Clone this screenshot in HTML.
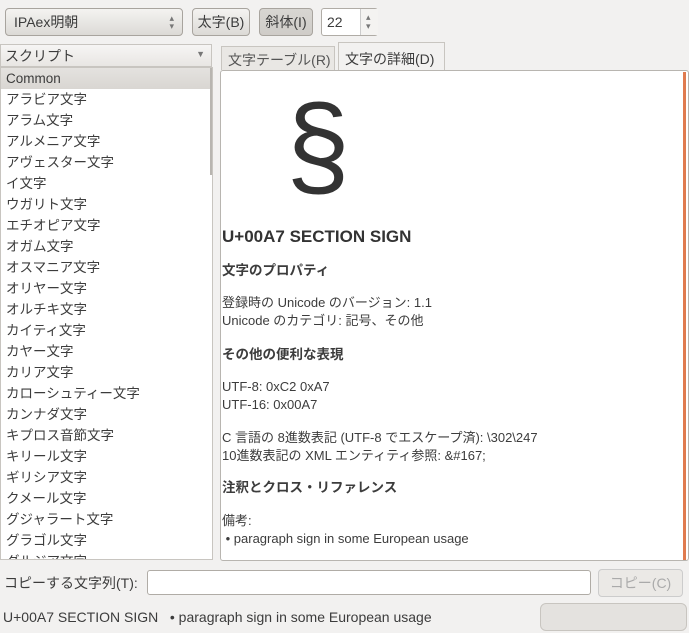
<!DOCTYPE html>
<html><head><meta charset="utf-8"><style>
*{margin:0;padding:0;box-sizing:border-box}
body{width:689px;height:633px;background:#f2f1f0;font-family:"Liberation Sans","Noto Sans CJK JP",sans-serif;font-size:13px;color:#3c3c3c;position:relative;overflow:hidden}
.a{position:absolute;white-space:nowrap}
.btn{position:absolute;border:1px solid #a8a49e;border-radius:4px;background:linear-gradient(#f4f3f1,#dcdad6);display:flex;align-items:center;justify-content:center;font-size:14px}
.list div{height:21px;line-height:21px;padding-left:5px;font-size:13.5px}
.t{position:absolute;left:222px;white-space:nowrap;font-size:13px;line-height:18px}
.b{font-weight:bold;font-size:13.5px}
</style></head><body>
<div class="btn" style="left:5px;top:8px;width:178px;height:28px;justify-content:flex-start;padding-left:8px">IPAex明朝<span class="a" style="right:8px;top:5px;font-size:9px;line-height:8px;color:#777">▴<br>▾</span></div>
<div class="btn" style="left:192px;top:8px;width:58px;height:28px">太字(B)</div>
<div class="btn" style="left:259px;top:8px;width:54px;height:28px;background:linear-gradient(#d8d6d2,#cfccc8)">斜体(I)</div>
<div class="a" style="left:321px;top:8px;width:57px;height:28px;border:1px solid #b0aca6;border-radius:3px;background:#fff;padding:5px 0 0 5px;font-size:14px">22<div class="a" style="left:38px;top:0;width:18px;height:26px;border-left:1px solid #ccc;background:#f4f3f1;font-size:9px;line-height:9px;padding:4px 0 0 5px;color:#777">▴<br>▾</div></div>

<div class="a" style="left:0;top:44px;width:212px;height:23px;border:1px solid #c8c5c0;background:linear-gradient(#f6f5f4,#e8e6e3);padding:1px 0 0 4px;font-size:14px">スクリプト<span class="a" style="right:6px;top:4px;font-size:9px;color:#777">▼</span></div>
<div class="a list" style="left:0;top:67px;width:213px;height:493px;background:#fff;border:1px solid #c8c5c0;overflow:hidden">
<div style="background:linear-gradient(#e4e2df,#d9d6d2)">Common</div>
<div>アラビア文字</div><div>アラム文字</div><div>アルメニア文字</div><div>アヴェスター文字</div><div>イ文字</div><div>ウガリト文字</div><div>エチオピア文字</div><div>オガム文字</div><div>オスマニア文字</div><div>オリヤー文字</div><div>オルチキ文字</div><div>カイティ文字</div><div>カヤー文字</div><div>カリア文字</div><div>カローシュティー文字</div><div>カンナダ文字</div><div>キプロス音節文字</div><div>キリール文字</div><div>ギリシア文字</div><div>クメール文字</div><div>グジャラート文字</div><div>グラゴル文字</div><div>グルジア文字</div>
<div class="a" style="left:209px;top:0;width:3px;height:107px;background:#b8b5b0"></div>
</div>

<div class="a" style="left:221px;top:46px;width:114px;height:24px;border:1px solid #c8c5c0;border-bottom:none;background:#e9e7e4;padding:3px 0 0 6px;font-size:14px;color:#555">文字テーブル(R)</div>
<div class="a" style="left:338px;top:42px;width:107px;height:29px;border:1px solid #c8c5c0;border-bottom:none;background:#f2f1f0;padding:6px 0 0 6px;font-size:14px">文字の詳細(D)</div>
<div class="a" style="left:220px;top:70px;width:469px;height:491px;border:1px solid #b8b5b0;background:#fff;border-radius:3px"></div>
<div class="a" style="left:683px;top:72px;width:3px;height:488px;background:#e07b4f"></div>
<div class="a" style="left:286px;top:89px;font-family:'Liberation Sans',sans-serif;font-size:115px;line-height:115px;color:#333">§</div>
<div class="t" style="top:227px;font-weight:bold;font-size:17px;line-height:20px;color:#333">U+00A7 SECTION SIGN</div>
<div class="t b" style="top:262px">文字のプロパティ</div>
<div class="t" style="top:294px">登録時の Unicode のバージョン: 1.1<br>Unicode のカテゴリ: 記号、その他</div>
<div class="t b" style="top:346px">その他の便利な表現</div>
<div class="t" style="top:378px">UTF-8: 0xC2 0xA7<br>UTF-16: 0x00A7</div>
<div class="t" style="top:429px">C 言語の 8進数表記 (UTF-8 でエスケープ済): \302\247<br>10進数表記の XML エンティティ参照: &amp;#167;</div>
<div class="t b" style="top:479px">注釈とクロス・リファレンス</div>
<div class="t" style="top:512px">備考:<br>&nbsp;• paragraph sign in some European usage</div>

<div class="a" style="left:4px;top:573px;font-size:14px">コピーする文字列(T):</div>
<div class="a" style="left:147px;top:570px;width:444px;height:25px;border:1px solid #b0aca6;border-radius:3px;background:#fff"></div>
<div class="btn" style="left:598px;top:569px;width:85px;height:28px;background:#ebe9e6;border-color:#ccc;color:#aaa">コピー(C)</div>
<div class="a" style="left:3px;top:609px;font-size:14px">U+00A7 SECTION SIGN &nbsp; • paragraph sign in some European usage</div>
<div class="a" style="left:540px;top:603px;width:147px;height:28px;border:1px solid #c8c5c0;border-radius:6px;background:#e4e2df"></div>
</body></html>
